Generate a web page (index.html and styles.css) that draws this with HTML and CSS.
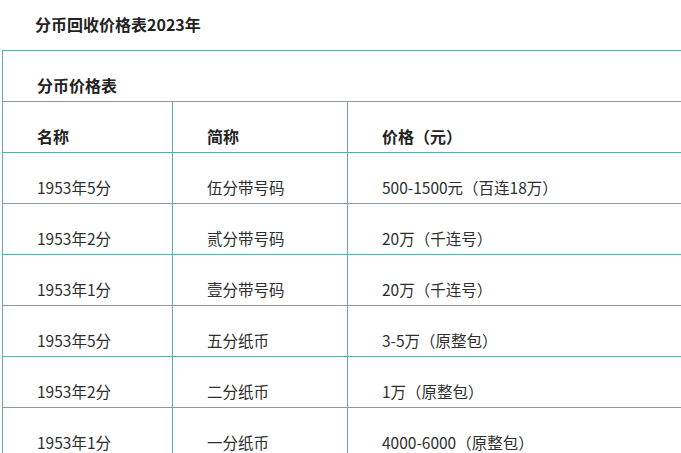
FILE: index.html
```html
<!DOCTYPE html>
<html lang="zh-CN">
<head>
<meta charset="utf-8">
<title>分币回收价格表2023年</title>
<link rel="stylesheet" href="styles.css">
</head>
<body>
<div class="page">
  <h1 class="title">分币回收价格表2023年</h1>
  <table class="price-table">
    <colgroup>
      <col class="c1"><col class="c2"><col class="c3">
    </colgroup>
    <tr class="caption-row"><td colspan="3" class="bold">分币价格表</td></tr>
    <tr class="head-row"><td class="bold">名称</td><td class="bold">简称</td><td class="bold">价格（元）</td></tr>
    <tr><td>1953年5分</td><td>伍分带号码</td><td>500-1500元（百连18万）</td></tr>
    <tr><td>1953年2分</td><td>贰分带号码</td><td>20万（千连号）</td></tr>
    <tr><td>1953年1分</td><td>壹分带号码</td><td>20万（千连号）</td></tr>
    <tr><td>1953年5分</td><td>五分纸币</td><td>3-5万（原整包）</td></tr>
    <tr><td>1953年2分</td><td>二分纸币</td><td>1万（原整包）</td></tr>
    <tr><td>1953年1分</td><td>一分纸币</td><td>4000-6000（原整包）</td></tr>
  </table>
</div>
</body>
</html>
```

FILE: styles.css
```css
html, body {
  margin: 0;
  padding: 0;
  background: #ffffff;
  overflow: hidden;
}
.page {
  width: 681px;
  height: 453px;
  overflow: hidden;
  font-family: "Noto Sans CJK SC", "Noto Sans", sans-serif;
  color: #2e2e2e;
}
.title {
  margin: 0;
  padding: 12px 0 0 35px;
  height: 38px;
  box-sizing: border-box;
  font-size: 16px;
  line-height: 24px;
  font-weight: bold;
  color: #222222;
}
.price-table {
  margin-left: 2px;
  width: 760px;
  border-collapse: collapse;
  table-layout: fixed;
  border: 1px solid #63aaa8;
  margin-top: 12px;
}
.c1 { width: 170px; }
.c2 { width: 175px; }
.price-table tr { height: 51px; }
.price-table td {
  border: 1px solid #63aaa8;
  vertical-align: top;
  padding: 19px 0 0 34px;
  height: 51px;
  box-sizing: border-box;
  line-height: 30px;
  font-size: 15.5px;
  white-space: nowrap;
}
.price-table td.bold {
  font-weight: bold;
  font-size: 16px;
  color: #222222;
}
```
